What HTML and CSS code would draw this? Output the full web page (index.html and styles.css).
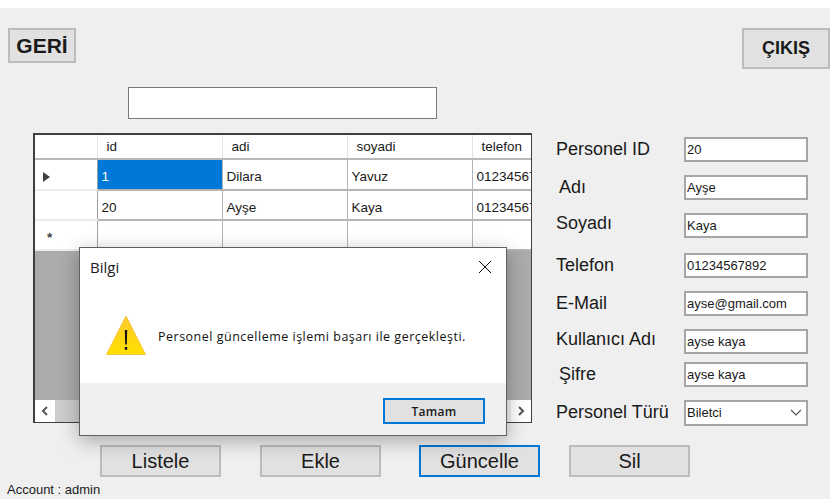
FILE: index.html
```html
<!DOCTYPE html>
<html lang="tr">
<head>
    <meta charset="UTF-8">
    <meta name="viewport" content="width=device-width, initial-scale=1.0">
    <title>Personel</title>
    <link rel="stylesheet" href="styles.css">
</head>
<body>
    <div class="window">
        <div class="top-row">
            <button class="btn btn-back">GERİ</button>
            <button class="btn btn-exit">ÇIKIŞ</button>
        </div>

        <input type="text" class="search">

        <div class="main-row">
            <div class="data-grid">
                <table>
                    <colgroup>
                        <col class="col-head">
                        <col class="col-std">
                        <col class="col-std">
                        <col class="col-std">
                        <col class="col-last">
                    </colgroup>
                    <thead>
                        <tr>
                            <th></th>
                            <th>id</th>
                            <th>adi</th>
                            <th>soyadi</th>
                            <th>telefon</th>
                        </tr>
                    </thead>
                    <tbody>
                        <tr class="row-first">
                            <td class="row-head"><span class="row-arrow"></span></td>
                            <td class="selected">1</td>
                            <td>Dilara</td>
                            <td>Yavuz</td>
                            <td>01234567892</td>
                        </tr>
                        <tr>
                            <td class="row-head"></td>
                            <td>20</td>
                            <td>Ayşe</td>
                            <td>Kaya</td>
                            <td>01234567892</td>
                        </tr>
                        <tr>
                            <td class="row-head"><span class="row-star">*</span></td>
                            <td></td>
                            <td></td>
                            <td></td>
                            <td></td>
                        </tr>
                    </tbody>
                </table>
                <div class="grid-empty"></div>
                <div class="scrollbar">
                    <span class="scroll-btn">
                        <svg width="10" height="10" viewBox="0 0 10 10"><path d="M7 1 3 5l4 4" fill="none" stroke="#555" stroke-width="2"/></svg>
                    </span>
                    <span class="scroll-thumb"></span>
                    <span class="scroll-track"></span>
                    <span class="scroll-btn">
                        <svg width="10" height="10" viewBox="0 0 10 10"><path d="M3 1l4 4-4 4" fill="none" stroke="#555" stroke-width="2"/></svg>
                    </span>
                </div>
            </div>

            <div class="fields">
                <div class="field">
                    <label>Personel ID</label>
                    <input type="text" value="20">
                </div>
                <div class="field">
                    <label class="label-in">Adı</label>
                    <input type="text" value="Ayşe">
                </div>
                <div class="field field-wide">
                    <label class="label-up">Soyadı</label>
                    <input type="text" value="Kaya">
                </div>
                <div class="field">
                    <label>Telefon</label>
                    <input type="text" value="01234567892">
                </div>
                <div class="field">
                    <label>E-Mail</label>
                    <input type="text" value="ayse@gmail.com">
                </div>
                <div class="field field-tight">
                    <label class="label-up">Kullanıcı Adı</label>
                    <input type="text" value="ayse kaya">
                </div>
                <div class="field">
                    <label class="label-in">Şifre</label>
                    <input type="text" value="ayse kaya">
                </div>
                <div class="field">
                    <label>Personel Türü</label>
                    <div class="combo">
                        <span>Biletci</span>
                        <svg width="12" height="8" viewBox="0 0 12 8"><path d="M1 1l5 5 5-5" fill="none" stroke="#555" stroke-width="1.2"/></svg>
                    </div>
                </div>
            </div>
        </div>

        <div class="actions">
            <button class="btn btn-action">Listele</button>
            <button class="btn btn-action">Ekle</button>
            <button class="btn btn-action btn-focus">Güncelle</button>
            <button class="btn btn-action btn-last">Sil</button>
        </div>

        <div class="account">Account : admin</div>

        <div class="dialog">
            <div class="dialog-title">
                <span>Bilgi</span>
                <svg width="14" height="14" viewBox="0 0 14 14"><path d="M1 1l12 12M13 1 1 13" fill="none" stroke="#111" stroke-width="1"/></svg>
            </div>
            <div class="dialog-body">
                <svg class="warn-icon" width="40" height="40" viewBox="0 0 40 40">
                    <defs>
                        <linearGradient id="warnFill" x1="0" y1="0" x2="0" y2="1">
                            <stop offset="0" stop-color="#fdc92b"/>
                            <stop offset="1" stop-color="#ffe000"/>
                        </linearGradient>
                    </defs>
                    <path d="M20 1 39.500 39.500H.5Z" fill="url(#warnFill)" stroke="#f8c33a" stroke-width="1" stroke-linejoin="round"/>
                    <path d="M18.800 15h2.400l-.4 14.500h-1.600Z" fill="#111"/>
                    <rect x="18.800" y="32" width="2.400" height="2.800" fill="#111"/>
                </svg>
                <p>Personel güncelleme işlemi başarı ile gerçekleşti.</p>
            </div>
            <div class="dialog-footer">
                <button class="btn btn-ok">Tamam</button>
            </div>
        </div>
    </div>
</body>
</html>
```

FILE: styles.css
```css
* {
    box-sizing: border-box;
}

body {
    margin: 0;
    background-color: #ffffff;
    font-family: "Liberation Sans", Arial, sans-serif;
    color: #1a1a1a;
    overflow: hidden;
}

.window {
    position: relative;
    margin-top: 8px;
    height: 491px;
    padding-top: 20px;
    background-color: #efefef;
}

.btn {
    background-color: #e1e1e1;
    border: 2px solid #bcbcbc;
    font-family: "Liberation Sans", Arial, sans-serif;
    color: #1a1a1a;
    padding: 0;
}

.top-row {
    display: flex;
    justify-content: space-between;
    align-items: flex-start;
    padding-left: 8px;
    height: 41px;
}

.btn-back {
    width: 68px;
    height: 35px;
    font-size: 21px;
    font-weight: bold;
}

.btn-exit {
    width: 88px;
    height: 41px;
    font-size: 18px;
    font-weight: bold;
}

.search {
    display: block;
    width: 309px;
    height: 32px;
    margin: 18px 0 14px 128px;
    border: 1px solid #7a7a7a;
    background-color: #fff;
}

.main-row {
    display: flex;
    align-items: flex-start;
    height: 290px;
    padding-left: 33px;
}

/* tablo */
.data-grid {
    display: flex;
    flex-direction: column;
    width: 499px;
    height: 290px;
    border: 2px solid #404040;
    border-bottom-width: 1px;
    border-right-width: 1px;
    background-color: #ababab;
    overflow: hidden;
}

table {
    table-layout: fixed;
    width: 497px;
    border-collapse: collapse;
    background-color: #fff;
    font-size: 13.5px;
}

.col-head {
    width: 62px;
}

.col-std {
    width: 125px;
}

.col-last {
    width: 60px;
}

th {
    height: 24px;
    padding: 0 0 0 9px;
    text-align: left;
    font-weight: normal;
    border-right: 1px solid #e4e4e4;
    border-bottom: 2px solid #b8b8b8;
    white-space: nowrap;
    overflow: hidden;
}

td {
    height: 30px;
    padding: 4px 0 0 4px;
    border-right: 1px solid #b4b4b4;
    border-bottom: 2px solid #b4b4b4;
    white-space: nowrap;
    overflow: hidden;
}

.row-first td {
    height: 31px;
    padding-top: 3px;
}

td.row-head {
    padding-left: 8px;
    border-bottom-color: #ececec;
    border-right-color: #a0a0a0;
}

td.selected {
    background-color: #0078d7;
    color: #fff;
}

.row-arrow {
    display: block;
    width: 0;
    height: 0;
    margin-top: 1px;
    border-left: 7px solid #404040;
    border-top: 5px solid transparent;
    border-bottom: 5px solid transparent;
}

.row-star {
    display: block;
    padding-left: 4px;
    font-weight: bold;
    color: #404040;
}

.grid-empty {
    flex: 1;
}

.scrollbar {
    display: flex;
    height: 22px;
    background-color: #f1f1f1;
}

.scroll-btn {
    display: flex;
    align-items: center;
    justify-content: center;
    width: 20px;
    background-color: #fff;
}

.scroll-thumb {
    width: 200px;
    background-color: #cdcdcd;
}

.scroll-track {
    flex: 1;
}

/* alanlar */
.fields {
    margin: 4px 0 0 24px;
}

.field {
    display: flex;
    align-items: center;
    height: 25px;
    margin-bottom: 13px;
}

.field-wide {
    margin-bottom: 15px;
}

.field-tight {
    margin-bottom: 8px;
}

.field label {
    width: 128px;
    font-size: 18px;
    white-space: nowrap;
}

.label-in {
    padding-left: 3px;
}

.label-up {
    margin-top: -4px;
}

.field input {
    width: 124px;
    height: 25px;
    padding: 0 1px;
    border: 2px solid #a6a6a6;
    background-color: #fff;
    font-family: "Liberation Sans", Arial, sans-serif;
    font-size: 13px;
    color: #1a1a1a;
}

.combo {
    display: flex;
    align-items: center;
    justify-content: space-between;
    width: 124px;
    height: 26px;
    padding: 0 4px 0 1px;
    border: 2px solid #a6a6a6;
    background-color: #fff;
    font-size: 13px;
}

/* alt butonlar */
.actions {
    display: flex;
    gap: 39px;
    margin-top: 22px;
    padding-left: 100px;
}

.btn-action {
    width: 121px;
    height: 32px;
    font-size: 20px;
}

.btn-focus {
    margin-left: -1px;
    border-color: #0078d7;
}

.btn-last {
    margin-left: -10px;
}

.account {
    margin: 5px 0 0 7px;
    font-size: 13px;
}

/* mesaj kutusu */
.dialog {
    position: absolute;
    left: 79px;
    top: 239px;
    display: flex;
    flex-direction: column;
    width: 428px;
    height: 189px;
    background-color: #fff;
    border: 1px solid #606060;
    box-shadow: 0 5px 18px rgba(0, 0, 0, 0.3);
}

.dialog-title {
    display: flex;
    align-items: center;
    justify-content: space-between;
    height: 38px;
    padding: 0 14px 0 10px;
    font-family: "Open Sans", sans-serif;
    font-size: 15px;
}

.dialog-body {
    display: flex;
    align-items: center;
    flex: 1;
    padding: 0 0 0 26px;
}

.dialog-body p {
    margin: 3px 0 0 12px;
    font-family: "Open Sans", sans-serif;
    font-size: 12.500px;
    letter-spacing: 0.5px;
    color: #111;
}

.dialog-footer {
    display: flex;
    justify-content: flex-end;
    align-items: flex-start;
    height: 52px;
    padding: 15px 21px 0 0;
    background-color: #f0f0f0;
}

.btn-ok {
    width: 102px;
    height: 26px;
    border-color: #0078d7;
    font-family: "Open Sans", sans-serif;
    font-size: 12px;
    font-weight: 600;
    letter-spacing: 0.3px;
}
```
